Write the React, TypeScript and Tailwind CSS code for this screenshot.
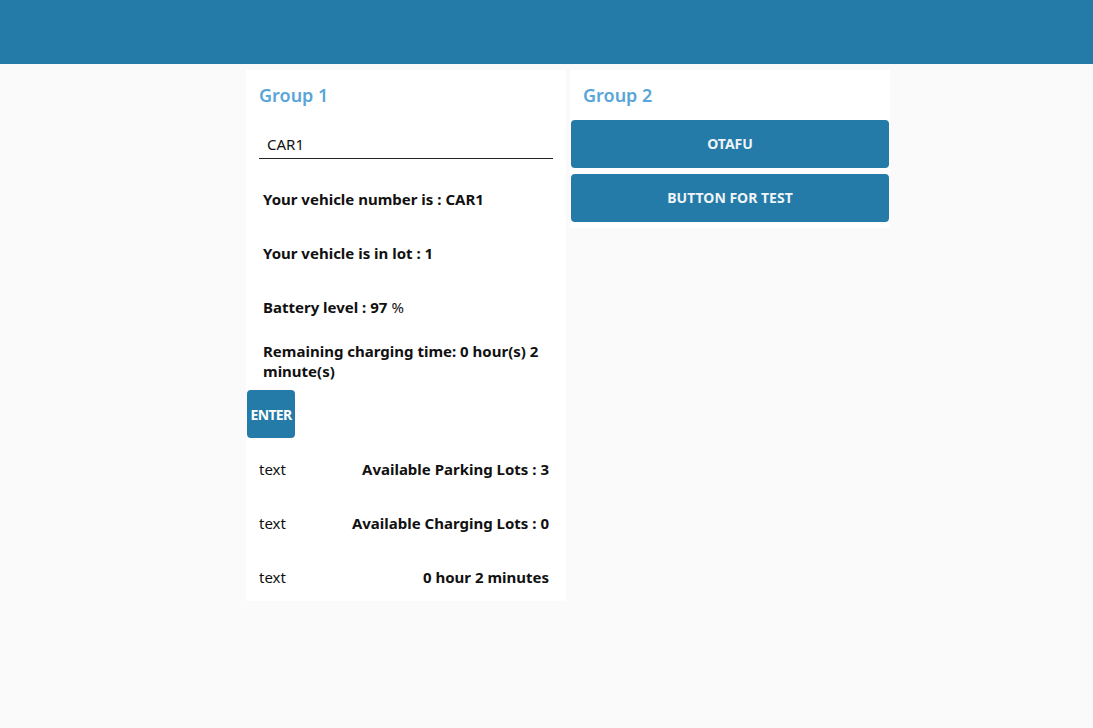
import React from 'react';

const font = { fontFamily: '"Noto Sans", "Open Sans", sans-serif' };

function TextRow({ children }: { children: React.ReactNode }) {
  return (
    <div className="h-12 flex items-center pl-4 pr-4 pt-[2px] text-[15px] font-bold leading-5 text-[#111]">
      {children}
    </div>
  );
}

function LabelRow({ value }: { value: string }) {
  return (
    <div className="h-12 flex items-center justify-between pl-3 pr-4 pt-[2px] text-[15px] leading-5 text-[#111]">
      <span className="font-normal">text</span>
      <span className="font-bold">{value}</span>
    </div>
  );
}

function GroupTitle({ children }: { children: React.ReactNode }) {
  return (
    <div className="h-[50px] flex items-center px-3 text-[18px] font-semibold text-[#59a5d8]">
      {children}
    </div>
  );
}

export default function App() {
  return (
    <div className="min-h-screen bg-[#fafafa]" style={font}>
      <div className="h-16 bg-[#247ba8]" />

      <div className="flex gap-1 pt-1.5 pl-[246px]">
        {/* Group 1 */}
        <div className="w-[320px] bg-white px-px pb-px">
          <GroupTitle>Group 1</GroupTitle>
          <div className="flex flex-col gap-1.5">
            <div className="h-12 px-3 flex items-end pb-[9px]">
              <div className="w-full border-b border-[#222] pl-2 pb-[3px] text-[15px] text-[#111]">CAR1</div>
            </div>
            <TextRow>Your vehicle number is : CAR1</TextRow>
            <TextRow>Your vehicle is in lot : 1</TextRow>
            <TextRow>
              Battery level : 97 <span className="font-normal ml-1">%</span>
            </TextRow>
            <TextRow>Remaining charging time: 0 hour(s) 2 minute(s)</TextRow>
            <div className="h-12">
              <button className="w-12 h-12 rounded-sm bg-[#247ba8] text-white text-[14px] font-bold tracking-tighter">
                ENTER
              </button>
            </div>
            <LabelRow value="Available Parking Lots : 3" />
            <LabelRow value="Available Charging Lots : 0" />
            <LabelRow value="0 hour 2 minutes" />
          </div>
        </div>

        {/* Group 2 */}
        <div className="w-[320px] self-start bg-white px-px pb-1.5">
          <GroupTitle>Group 2</GroupTitle>
          <div className="flex flex-col gap-1.5">
            <button className="h-12 w-full rounded-sm bg-[#247ba8] text-[#eef4f8] text-sm font-bold">OTAFU</button>
            <button className="h-12 w-full rounded-sm bg-[#247ba8] text-[#eef4f8] text-sm font-bold">BUTTON FOR TEST</button>
          </div>
        </div>
      </div>
    </div>
  );
}
